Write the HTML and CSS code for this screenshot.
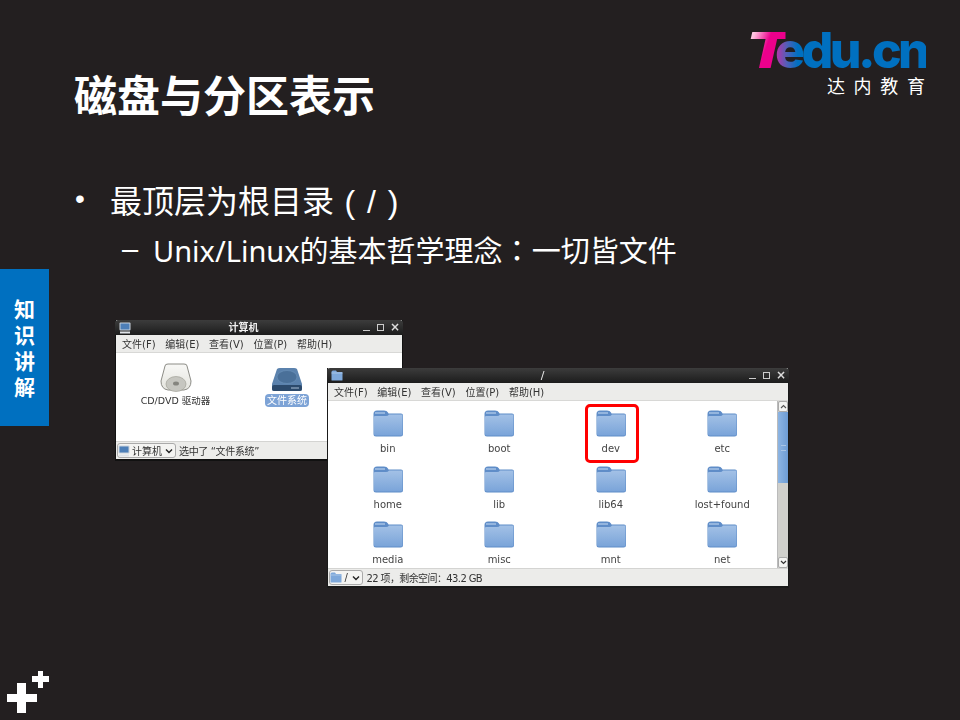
FILE: index.html
```html
<!DOCTYPE html>
<html lang="zh">
<head>
<meta charset="utf-8">
<title>磁盘与分区表示</title>
<link rel="stylesheet" href="styles.css">
</head>
<body>
<svg class="defs" width="0" height="0" aria-hidden="true">
  <defs>
    <linearGradient id="fg" x1="0" y1="0" x2="0" y2="1">
      <stop offset="0" stop-color="#a3c1e6"/><stop offset="1" stop-color="#7aa4d9"/>
    </linearGradient>
    <symbol id="folder" viewBox="0 0 30 27">
      <path d="M0.500 4Q0.500 0.500 4 0.500H11Q14 0.500 15 2.500L15.500 3.500H28Q30 3.500 30 5.500V24Q30 26.500 27.500 26.500H3Q0.500 26.500 0.500 24Z" fill="#5f8dc8"/>
      <path d="M1 7Q1 6 2 6H13Q15 6 16 4.500H28.500Q29.500 4.500 29.500 5.500V24Q29.500 25.500 28 25.500H3Q1 25.500 1 24Z" fill="url(#fg)"/>
      <path d="M2 3H12" stroke="#a6c3e6" stroke-width="1.500"/>
    </symbol>
    <symbol id="monitor" viewBox="0 0 12 12">
      <rect x="0.500" y="0.500" width="11" height="8" rx="1" fill="#c9d2dc"/>
      <rect x="1.500" y="1.500" width="9" height="6" fill="#4d7fb8"/>
      <rect x="1" y="9.500" width="10" height="2" fill="#dfe3e8"/>
    </symbol>
    <symbol id="tiny-folder" viewBox="0 0 12 11">
      <path d="M0.500 2Q0.500 0.500 2 0.500H5L6 2H11Q11.500 2 11.500 3V10Q11.500 10.500 11 10.500H1Q0.500 10.500 0.500 10Z" fill="#7ea8da"/>
      <path d="M0.500 3H11.500" stroke="#b4cdea" stroke-width="0.800"/>
    </symbol>
  </defs>
</svg>

<main class="slide">
  <header class="head">
    <h1 class="title">磁盘与分区表示</h1>
    <div class="logo">
      <div class="logo-mark"><span class="logo-t">T</span><span class="logo-rest">edu.cn</span></div>
      <div class="logo-sub">达内教育</div>
    </div>
  </header>

  <section class="points">
    <p class="point"><span class="dot">•</span><span>最顶层为根目录<span class="paren"> ( / )</span></span></p>
    <p class="subpoint"><span class="dash">–</span><span class="subtext">Unix/Linux的基本哲学理念<span class="colon" lang="zh-Hant">：</span>一切皆文件</span></p>
  </section>

  <div class="middle">
    <aside class="tag"><span>知</span><span>识</span><span>讲</span><span>解</span></aside>

    <div class="desktop">
      <section class="win win-computer">
        <div class="titlebar">
          <svg class="tb-icon" width="12" height="12"><use href="#monitor"/></svg>
          <span class="tb-title">计算机</span>
          <span class="tb-btns"><i class="b-min"></i><i class="b-max"></i><i class="b-close">×</i></span>
        </div>
        <nav class="menu"><span>文件(F)</span><span>编辑(E)</span><span>查看(V)</span><span>位置(P)</span><span>帮助(H)</span></nav>
        <div class="places">
          <div class="place">
            <svg width="32" height="30" viewBox="0 0 32 30">
              <defs><linearGradient id="cd" x1="0" y1="0" x2="0" y2="1"><stop offset="0" stop-color="#f8f8f6"/><stop offset="1" stop-color="#e4e4de"/></linearGradient></defs>
              <path d="M5 3Q5 1 8 1H24Q27 1 27 3L31 18Q31 26 24 27H8Q1 26 1 18Z" fill="url(#cd)" stroke="#8c8c86"/>
              <ellipse cx="16" cy="21" rx="10" ry="7.500" fill="#c6c6c0" stroke="#99998f" stroke-width="0.600"/>
              <ellipse cx="16" cy="20.500" rx="3" ry="2" fill="#85857f"/>
            </svg>
            <span class="place-label cd-label">CD/DVD 驱动器</span>
          </div>
          <div class="place">
            <svg width="32" height="26" viewBox="0 0 32 26">
              <path d="M6 2Q7 1 9 1H23Q25 1 26 2L31 17V22Q31 24 29 24H3Q1 24 1 22V17Z" fill="#5b82ad"/>
              <ellipse cx="16" cy="10" rx="10" ry="6.500" fill="#4a7099" stroke="#6d93ba" stroke-width="0.600"/>
              <rect x="1" y="18" width="30" height="6" rx="2" fill="#2c4a6c"/>
              <path d="M20 21H28" stroke="#a9bfd6"/>
            </svg>
            <span class="place-label selected">文件系统</span>
          </div>
        </div>
        <footer class="status">
          <span class="pick"><svg width="12" height="12"><use href="#monitor"/></svg>计算机<svg class="chev" width="8" height="6" viewBox="0 0 8 6"><path d="M1 1.500L4 4.500L7 1.500" fill="none" stroke="#222" stroke-width="1.400"/></svg></span>
          <span class="selinfo">选中了 “文件系统”</span>
        </footer>
      </section>

      <section class="win win-root">
        <div class="titlebar">
          <svg class="tb-icon" width="12" height="11"><use href="#tiny-folder"/></svg>
          <span class="tb-title">/</span>
          <span class="tb-btns"><i class="b-min"></i><i class="b-max"></i><i class="b-close">×</i></span>
        </div>
        <nav class="menu"><span>文件(F)</span><span>编辑(E)</span><span>查看(V)</span><span>位置(P)</span><span>帮助(H)</span></nav>
        <div class="view">
          <div class="grid">
            <div class="item"><svg width="30" height="27"><use href="#folder"/></svg><span>bin</span></div>
            <div class="item"><svg width="30" height="27"><use href="#folder"/></svg><span>boot</span></div>
            <div class="item"><svg width="30" height="27"><use href="#folder"/></svg><span>dev</span></div>
            <div class="item"><svg width="30" height="27"><use href="#folder"/></svg><span>etc</span></div>
            <div class="item"><svg width="30" height="27"><use href="#folder"/></svg><span>home</span></div>
            <div class="item"><svg width="30" height="27"><use href="#folder"/></svg><span>lib</span></div>
            <div class="item"><svg width="30" height="27"><use href="#folder"/></svg><span>lib64</span></div>
            <div class="item"><svg width="30" height="27"><use href="#folder"/></svg><span>lost+found</span></div>
            <div class="item"><svg width="30" height="27"><use href="#folder"/></svg><span>media</span></div>
            <div class="item"><svg width="30" height="27"><use href="#folder"/></svg><span>misc</span></div>
            <div class="item"><svg width="30" height="27"><use href="#folder"/></svg><span>mnt</span></div>
            <div class="item"><svg width="30" height="27"><use href="#folder"/></svg><span>net</span></div>
          </div>
          <div class="scroll">
            <span class="sc-btn"><svg width="7" height="5" viewBox="0 0 7 5"><path d="M1 4L3.500 1.500L6 4" fill="none" stroke="#555" stroke-width="1.100"/></svg></span>
            <span class="sc-thumb"><i></i></span>
            <span class="sc-rest"></span>
            <span class="sc-btn"><svg width="7" height="5" viewBox="0 0 7 5"><path d="M1 1L3.500 3.500L6 1" fill="none" stroke="#333" stroke-width="1.200"/></svg></span>
          </div>
        </div>
        <footer class="status">
          <span class="pick pick-root"><svg width="12" height="11"><use href="#tiny-folder"/></svg>/<svg class="chev" width="8" height="6" viewBox="0 0 8 6"><path d="M1 1.500L4 4.500L7 1.500" fill="none" stroke="#222" stroke-width="1.400"/></svg></span>
          <span class="free">22 项，剩余空间：43.2 GB</span>
        </footer>
      </section>

      <div class="highlight"></div>
    </div>
  </div>

  <footer class="foot">
    <svg width="44" height="44" viewBox="0 0 44 44">
      <path d="M10 13H19V24H30V32H19V43H10V32H0V24H10Z" fill="#fff"/>
      <path d="M31 1H36V6H42V12H36V18H31V12H25V6H31Z" fill="#fff"/>
    </svg>
  </footer>
</main>
</body>
</html>
```

FILE: styles.css
```css
* { box-sizing: border-box; }
html, body { margin: 0; padding: 0; }
body { width: 960px; height: 720px; overflow: hidden; background: #231f20; }
.defs { position: absolute; }

.slide {
  width: 960px;
  height: 720px;
  display: flex;
  flex-direction: column;
  color: #fff;
  font-family: "Liberation Sans", "Noto Sans CJK SC", sans-serif;
}

/* header */
.head {
  height: 170px;
  display: flex;
  justify-content: space-between;
  align-items: flex-start;
  padding: 0 35px 0 74px;
}
.title {
  margin: 63px 0 0;
  font-size: 43px;
  line-height: 60px;
  font-weight: 700;
  font-family: "Noto Sans CJK SC", sans-serif;
}
.logo { margin-top: 26px; width: 176px; }
.logo-mark {
  font-family: "Inter", "Liberation Sans", sans-serif;
  font-size: 50px;
  line-height: 48px;
  font-weight: 800;
  letter-spacing: -3.600px;
  white-space: nowrap;
}
.logo-t, .logo-rest {
  -webkit-background-clip: text;
  background-clip: text;
  color: transparent;
}
.logo-t {
  display: inline-block;
  width: 30px;
  margin-left: -4px;
  font-style: italic;
  transform: scaleX(1.35);
  transform-origin: left center;
  background-image: linear-gradient(105deg, #fff 0, #fbd 22%, #ec008c 50%, #ec008c 100%);
}
.logo-rest {
  background-image: linear-gradient(90deg, #c030a8 0, #5060b8 8%, #0070c0 15%, #0070c0 100%);
}
.logo-sub {
  margin-top: 1px;
  font-family: "Noto Sans CJK SC", sans-serif;
  font-size: 18px;
  line-height: 20px;
  letter-spacing: 8.700px;
  text-align: right;
  margin-right: -8.700px;
  white-space: nowrap;
}

/* bullets */
.points {
  height: 99px;
  font-family: "Noto Sans CJK SC", "Liberation Sans", sans-serif;
}
.point, .subpoint { margin: 0; display: flex; white-space: nowrap; }
.point { height: 50px; margin-top: 4px; font-size: 32px; line-height: 50px; padding-left: 75px; }
.dot { width: 35px; font-family: "Liberation Sans", sans-serif; font-size: 28px; }
.paren { font-family: "Liberation Sans", sans-serif; letter-spacing: 1.500px; }
.subpoint { height: 50px; font-size: 29px; line-height: 50px; padding-left: 122px; }
.subtext { font-family: "Noto Sans", "Noto Sans CJK SC", sans-serif; }
.colon { font-family: "Noto Sans CJK TC", sans-serif; }
.dash { width: 31px; font-family: "Liberation Sans", sans-serif; }

/* middle */
.middle { height: 401px; display: flex; align-items: flex-start; }
.tag {
  width: 49px;
  height: 157px;
  background: #0070c0;
  display: flex;
  flex-direction: column;
  align-items: center;
  justify-content: center;
  gap: 5px;
  font-family: "Noto Sans CJK SC", sans-serif;
  font-size: 21px;
  line-height: 21px;
  font-weight: 700;
}
.desktop { position: relative; flex: 1; height: 401px; }

/* windows */
.win {
  position: absolute;
  display: flex;
  flex-direction: column;
  background: #fff;
  color: #333;
  font-family: "DejaVu Sans", "Noto Sans CJK SC", sans-serif;
  font-size: 10px;
  filter: blur(0.35px);
}
.win-computer { left: 66px; top: 51px; width: 288px; height: 141px; border: 1px solid #111; border-top: 0; border-bottom-width: 2px; }
.win-root { left: 278px; top: 99px; width: 462px; height: 220px; border: 1px solid #1a1a1a; border-top: 0; border-bottom-width: 2px; }

.titlebar {
  height: 15px;
  flex: none;
  display: flex;
  align-items: center;
  position: relative;
  padding: 0 6px 0 4px;
  background: linear-gradient(#3c3c3c, #1c1c1c);
  border-radius: 3px 3px 0 0;
  margin: 0 -1px;
  color: #f0f0f0;
  font-weight: 700;
}
.tb-title { position: absolute; left: 0; right: 31px; text-align: center; line-height: 15px; }
.win-root .tb-title { font-weight: 400; font-size: 11px; }
.tb-btns {
  margin-left: auto;
  display: flex;
  align-items: center;
  gap: 6.500px;
  position: relative;
}
.tb-btns i { display: block; width: 7px; height: 7px; font-style: normal; }
.b-min { border-bottom: 1.500px solid #ccc; }
.b-max { border: 1.500px solid #ccc; }
.b-close { font-size: 12px; line-height: 7px; color: #ddd; text-align: center; font-weight: 700; }

.menu {
  height: 18px;
  flex: none;
  display: flex;
  align-items: center;
  gap: 9.700px;
  padding: 0 6px;
  background: #ececea;
  border-bottom: 1.500px solid #d8d8d6;
  color: #333;
  white-space: nowrap;
}

.places { flex: 1; display: flex; padding-top: 10px; }
.place { display: flex; flex-direction: column; align-items: center; height: 44px; justify-content: flex-end; }
.place:first-child { width: 119px; }
.place:last-child { width: 50px; margin-left: 27px; }
.place-label { line-height: 13px; white-space: nowrap; margin-top: 1px; }
.cd-label { font-size: 9.500px; }
.selected { background: #7da3d6; color: #fff; border-radius: 4px; padding: 0 2px; }

.status {
  height: 18px;
  flex: none;
  display: flex;
  align-items: center;
  gap: 3px;
  padding: 0 1px;
  background: #ececea;
  border-top: 1px solid #d4d4d2;
  white-space: nowrap;
  color: #333;
}
.pick {
  height: 15px;
  display: flex;
  align-items: center;
  gap: 2px;
  padding: 0 2px 0 0;
  background: #f4f4f2;
  border: 1px solid #aaa;
  border-radius: 3px;
}
.pick-root { gap: 2.500px; }
.chev { margin-left: 1px; }
.pick-root .chev { margin-left: 2px; }
.selinfo { letter-spacing: -0.350px; }
.free { letter-spacing: -0.600px; }

.view { flex: 1; min-height: 0; display: flex; }
.grid {
  flex: 1;
  display: grid;
  grid-template-columns: repeat(4, 111.500px);
  grid-auto-rows: 55.500px;
  padding: 9px 0 0 4px;
  overflow: hidden;
}
.item { display: flex; flex-direction: column; align-items: center; font-size: 10px; color: #444; }
.item svg { flex: none; }
.item span { line-height: 14px; margin-top: 5px; white-space: nowrap; }

.scroll {
  width: 11px;
  flex: none;
  display: flex;
  flex-direction: column;
  background: #d0d0cc;
  border-left: 1px solid #bbb;
}
.sc-btn {
  height: 11px;
  flex: none;
  display: flex;
  align-items: center;
  justify-content: center;
  background: #f4f4f2;
  border: 1px solid #aaa;
  border-radius: 2px;
}
.sc-thumb {
  height: 71px;
  flex: none;
  display: flex;
  align-items: center;
  justify-content: center;
  background: linear-gradient(90deg, #8db5e3, #6d9cd4);
}
.sc-thumb i { display: block; width: 5px; height: 6px; border-top: 1px solid #a9c5e6; border-bottom: 1px solid #a9c5e6; }
.sc-rest { flex: 1; }

.highlight {
  position: absolute;
  left: 536px;
  top: 135px;
  width: 54px;
  height: 59px;
  border: 3px solid #f00;
  border-radius: 5px;
}

.foot { height: 50px; padding: 0 0 0 7px; }
.foot svg { display: block; }
```
